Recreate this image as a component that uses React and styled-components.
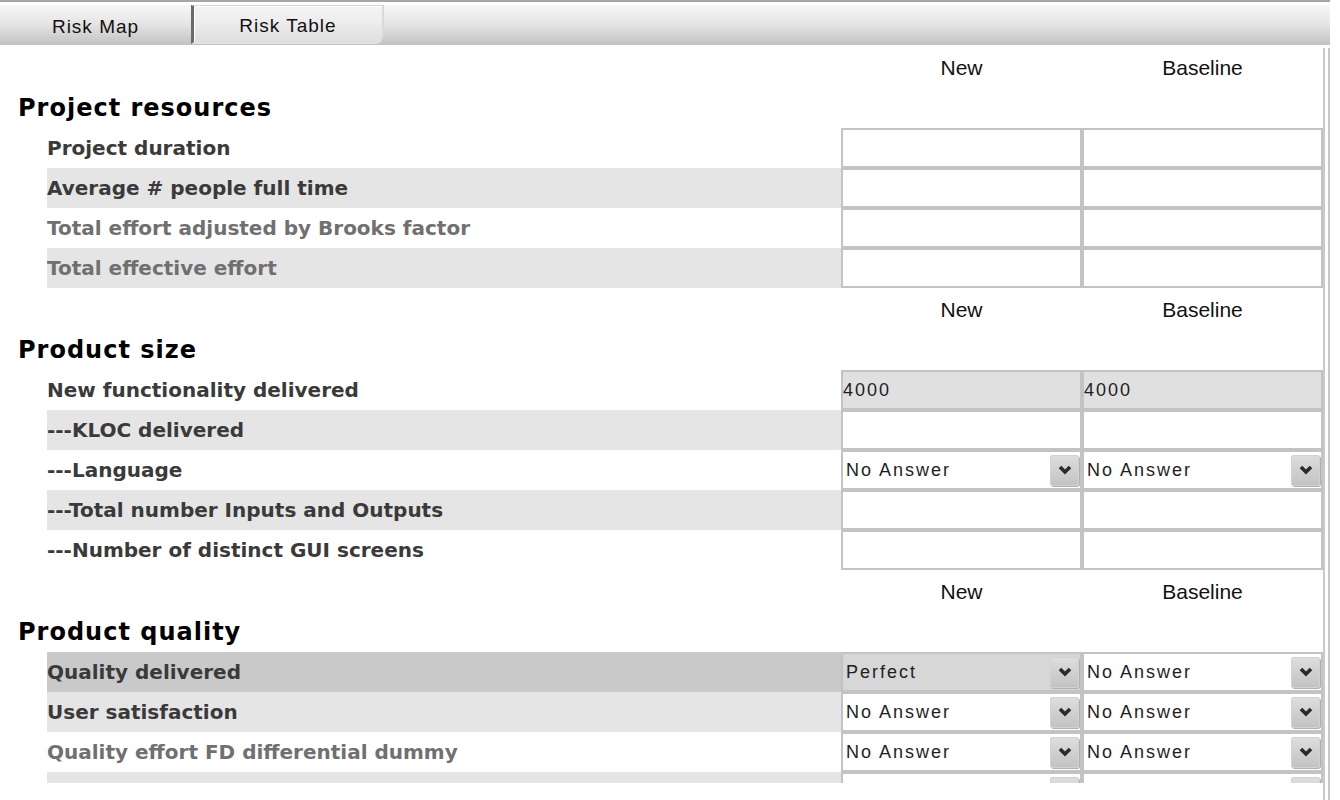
import React from 'react';
import styled, { createGlobalStyle } from 'styled-components';

const GlobalStyle = createGlobalStyle`
  html, body {
    margin: 0;
    padding: 0;
    background: #fff;
  }
  body {
    font-family: "Liberation Sans", Arial, sans-serif;
  }
`;

const Page = styled.div`
  width: 1340px;
  height: 800px;
  overflow: hidden;
  background: #fff;
`;

const TopRule = styled.div`
  width: 1330px;
  height: 2px;
  background: #a6a6a6;
  margin-bottom: 3px;
`;

const TabStrip = styled.div`
  width: 1330px;
  height: 40px;
  display: flex;
  background: linear-gradient(#f7f7f7, #e6e6e6 45%, #c2c2c2);
`;

const Tab = styled.div`
  width: 191px;
  display: flex;
  align-items: center;
  justify-content: center;
  padding-top: 3px;
  font-size: 19px;
  letter-spacing: 1px;
  color: #111;
  box-sizing: border-box;
  ${p =>
    p.$active
      ? `
    width: 193px;
    border-left: 3px solid #6a6a6a;
    border-top: 1px solid #d8d8d8;
    border-right: 2px solid #dadada;
    border-bottom: 2px solid #e2e2e2;
    border-bottom-right-radius: 9px;
    background: linear-gradient(#f4f4f4, #ececec 50%, #dedede);
    box-shadow: inset 1px 1px 0 #fff;
    height: 39px;
  `
      : ''}
`;

const Body = styled.div`
  display: flex;
  padding-top: 3px;
`;

const Viewport = styled.div`
  width: 1323px;
  height: 735px;
  overflow: hidden;
`;

const Rail = styled.div`
  width: 3px;
  height: 760px;
  border-left: 2px solid #c9c9c9;
  border-right: 2px solid #c9c9c9;
`;

const Section = styled.div`
  margin-bottom: 2px;
`;

const HeadRow = styled.div`
  display: grid;
  grid-template-columns: 841px 241px 241px;
  height: 40px;
  align-items: center;
  font-size: 21px;
  color: #111;
  text-align: center;
`;

const Title = styled.div`
  height: 40px;
  display: flex;
  align-items: center;
  padding-left: 18px;
  font-family: "DejaVu Sans", Verdana, sans-serif;
  font-weight: bold;
  font-size: 24px;
  letter-spacing: 1px;
  color: #000;
`;

const Row = styled.div`
  display: grid;
  grid-template-columns: 47px 794px 241px 241px;
  height: 40px;
`;

const rowBg = { white: '#fff', gray: '#e5e5e5', hl: '#c9c9c9' };

const Label = styled.div`
  grid-column: 2;
  display: flex;
  align-items: center;
  background: ${p => rowBg[p.$tone]};
  font-family: "DejaVu Sans", Verdana, sans-serif;
  font-weight: bold;
  font-size: 20px;
  color: ${p => (p.$muted ? '#707070' : '#3a3a3a')};
  white-space: nowrap;
`;

const Cell = styled.div`
  box-sizing: border-box;
  height: 40px;
  border: 2px solid #c3c3c3;
  background: ${p => p.$bg || '#fff'};
  display: flex;
  align-items: center;
  padding: 2px ${p => (p.$select ? '1px' : '0')} 2px ${p => (p.$select ? '3px' : '0')};
  font-size: 18px;
  letter-spacing: 2px;
  color: #1e1e1e;
  min-width: 0;
`;

const CellText = styled.span`
  flex: 1;
  min-width: 0;
`;

const DropButton = styled.div`
  flex-shrink: 0;
  width: 29px;
  height: 31px;
  border-radius: 3px;
  background: linear-gradient(#dedede, #c2c2c2);
  box-shadow: inset 0 0 0 1px #d2d2d2, 1px 1px 0 #b0b0b0;
  display: flex;
  align-items: center;
  justify-content: center;
`;

const Chevron = () => (
  <svg width="14" height="10" viewBox="0 0 14 10">
    <polyline points="2,2 7,7 12,2" fill="none" stroke="#2a2a2a" strokeWidth="3.6" />
  </svg>
);

const ValueCell = ({ cell }) => {
  if (!cell) return <Cell />;
  if (cell.type === 'value') return <Cell $bg="#e0e0e0">{cell.text}</Cell>;
  return (
    <Cell $select $bg={cell.bg}>
      <CellText>{cell.text}</CellText>
      <DropButton>
        <Chevron />
      </DropButton>
    </Cell>
  );
};

const sel = (text, bg) => ({ type: 'select', text, bg });
const val = text => ({ type: 'value', text });

const sections = [
  {
    title: 'Project resources',
    rows: [
      { label: 'Project duration', tone: 'white' },
      { label: 'Average # people full time', tone: 'gray' },
      { label: 'Total effort adjusted by Brooks factor', tone: 'white', muted: true },
      { label: 'Total effective effort', tone: 'gray', muted: true },
    ],
  },
  {
    title: 'Product size',
    rows: [
      { label: 'New functionality delivered', tone: 'white', cells: [val('4000'), val('4000')] },
      { label: '---KLOC delivered', tone: 'gray' },
      { label: '---Language', tone: 'white', cells: [sel('No Answer'), sel('No Answer')] },
      { label: '---Total number Inputs and Outputs', tone: 'gray' },
      { label: '---Number of distinct GUI screens', tone: 'white' },
    ],
  },
  {
    title: 'Product quality',
    rows: [
      { label: 'Quality delivered', tone: 'hl', cells: [sel('Perfect', '#d7d7d7'), sel('No Answer')] },
      { label: 'User satisfaction', tone: 'gray', cells: [sel('No Answer'), sel('No Answer')] },
      { label: 'Quality effort FD differential dummy', tone: 'white', muted: true, cells: [sel('No Answer'), sel('No Answer')] },
      { label: '', tone: 'gray', cells: [sel(''), sel('')] },
    ],
  },
];

export default function App() {
  return (
    <Page>
      <GlobalStyle />
      <TopRule />
      <TabStrip>
        <Tab>Risk Map</Tab>
        <Tab $active>Risk Table</Tab>
      </TabStrip>
      <Body>
        <Viewport>
          {sections.map(section => (
            <Section key={section.title}>
              <HeadRow>
                <span />
                <span>New</span>
                <span>Baseline</span>
              </HeadRow>
              <Title>{section.title}</Title>
              {section.rows.map((row, i) => (
                <Row key={i}>
                  <Label $tone={row.tone} $muted={row.muted}>{row.label}</Label>
                  <ValueCell cell={row.cells && row.cells[0]} />
                  <ValueCell cell={row.cells && row.cells[1]} />
                </Row>
              ))}
            </Section>
          ))}
        </Viewport>
        <Rail />
      </Body>
    </Page>
  );
}
